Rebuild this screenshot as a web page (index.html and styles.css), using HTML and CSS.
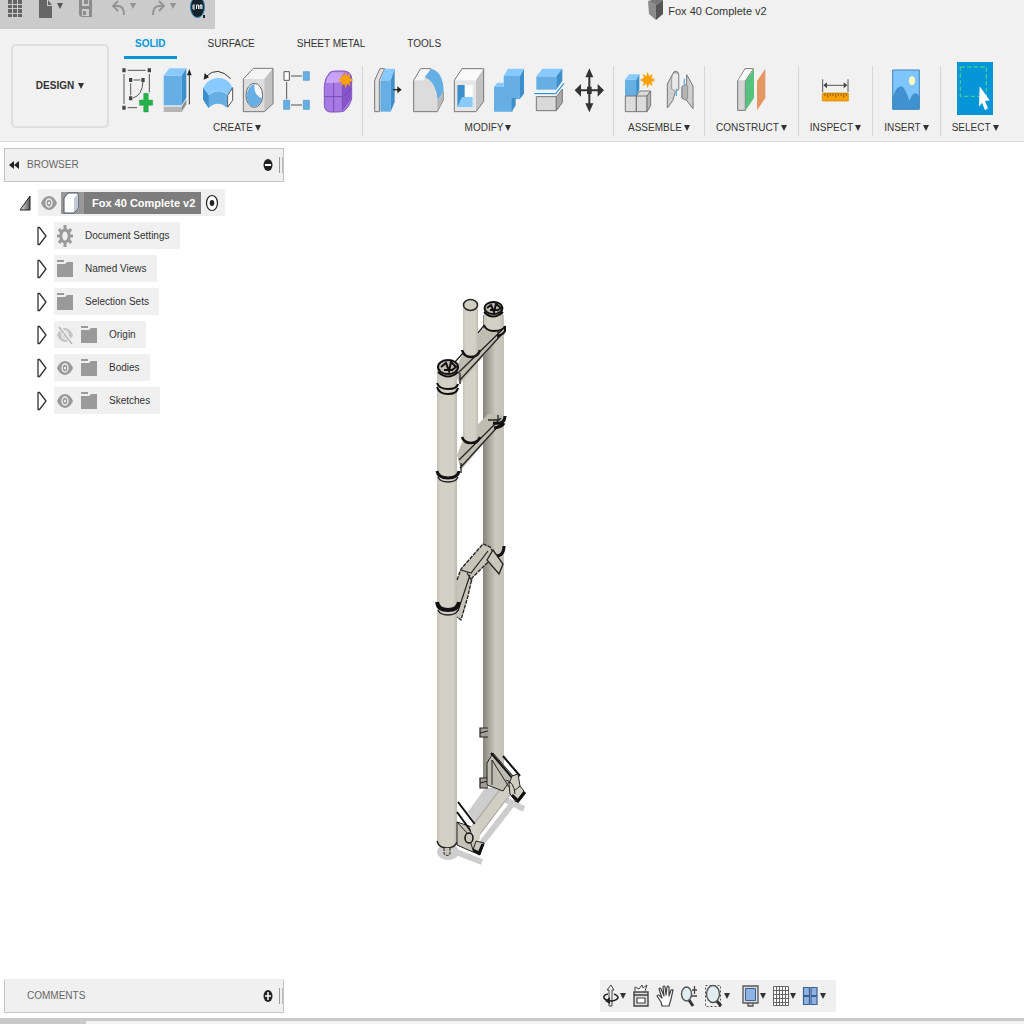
FILE: index.html
```html
<!DOCTYPE html>
<html lang="en">
<head>
    <meta charset="UTF-8">
    <meta name="viewport" content="width=device-width, initial-scale=1.0">
    <title>Fox 40 Complete v2</title>
    <link rel="stylesheet" href="styles.css">
</head>
<body>

<!-- Shared symbols -->
<svg class="symbols" aria-hidden="true">
    <symbol id="star" viewBox="-32 -34 64 68">
        <path fill="#f9a100" d="M0-33 6-15 19-25 15-9 31 0 15 9 19 25 6 15 0 33-6 15-19 25-15 9-31 0-15-9-19-25-6-15z"/>
    </symbol>
    <symbol id="folder" viewBox="0 0 16 18">
        <path fill="#9a9a9a" d="M0 0h7v2H0zM0 4h8l2-2h6v15H0z"/>
    </symbol>
    <symbol id="eye" viewBox="0 0 16 18">
        <path fill="#9a9a9a" d="M0 9Q3 2 8 2t8 7q-3 7-8 7T0 9z"/>
        <ellipse cx="8" cy="9" rx="3" ry="4" fill="#9a9a9a" stroke="#f0f0f0" stroke-width="1.3"/>
        <ellipse cx="8" cy="9" rx="1" ry="1.5" fill="#f0f0f0"/>
    </symbol>
    <symbol id="eye-off" viewBox="0 0 16 18">
        <path fill="#c4c4c4" d="M0 9Q3 2 8 2t8 7q-3 7-8 7T0 9z"/>
        <ellipse cx="8" cy="9" rx="3" ry="4" fill="#c4c4c4" stroke="#f0f0f0" stroke-width="1.3"/>
        <path stroke="#f0f0f0" stroke-width="4" d="M2 1 15 17"/>
        <path stroke="#b4b4b4" stroke-width="1.4" d="M2 1 15 18"/>
    </symbol>
    <symbol id="closed" viewBox="0 0 10 20">
        <path fill="#fff" stroke="#333" stroke-width="1.3" stroke-linejoin="round" d="M1 1.500h1.500L9 10 2.500 18.500H1z"/>
    </symbol>
</svg>

<header class="header">
    <div class="title-bar">
        <nav class="quick-bar" aria-label="Quick access">
            <div class="quick-group">
                <button aria-label="Data panel">
                    <svg width="16" height="20" viewBox="0 0 16 20"><path fill="#666" d="M1 0h4v4H1zM6 0h4v4H6zM11 0h4v4h-4zM1 5h4v3H1zM6 5h4v3H6zM11 5h4v3h-4zM1 9h4v4H1zM6 9h4v4H6zM11 9h4v4h-4zM1 14h4v3H1zM6 14h4v3H6zM11 14h4v3h-4z"/></svg>
                </button>
                <button aria-label="File">
                    <svg width="16" height="20" viewBox="0 0 16 20"><path fill="#666" d="M2 0h8v6h5v12H2zM11 0l4 5h-4z"/></svg>
                    <span class="caret dark"></span>
                </button>
                <button aria-label="Save">
                    <svg width="16" height="20" viewBox="0 0 16 20"><path fill="#8c8c8c" fill-rule="evenodd" d="M2 0h13v17H4l-2-2zM5 0v6h7V0zM5 9v7h7V9z"/><path fill="#8c8c8c" d="M7 0h4v4H7zM6 11h3v4H6z"/></svg>
                </button>
            </div>
            <div class="quick-group">
                <button aria-label="Undo">
                    <svg width="16" height="20" viewBox="0 0 16 20"><path fill="none" stroke="#929292" stroke-width="1.800" d="M8 1 3 6l5 5M3 6h5q6 0 6 9"/></svg>
                    <span class="caret"></span>
                </button>
                <button aria-label="Redo">
                    <svg width="16" height="20" viewBox="0 0 16 20"><path fill="none" stroke="#929292" stroke-width="1.800" d="M9 1l5 5-5 5M14 6H9q-6 0-6 9"/></svg>
                    <span class="caret"></span>
                </button>
                <button aria-label="Account">
                    <svg width="16" height="20" viewBox="0 0 16 20"><ellipse cx="7.500" cy="7" rx="7" ry="10.500" fill="#14232c" stroke="#2b89ad"/><path fill="none" stroke="#e8eff2" d="M5 5H3v4h2M3 7h2M6.500 9V5h2v4M10 9V5h2v4M11 5v4"/><path fill="#123" d="M13 15h2v3h-2z"/></svg>
                </button>
            </div>
        </nav>
        <h1 class="doc-title">
            <svg width="16" height="20" viewBox="0 0 16 20"><path fill="#8b8b8b" d="M0 1 8 5v15L1 14z"/><path fill="#555" d="M8 5l7-5v14l-7 6z"/><path fill="#777" d="M0 1 4 0h11L8 5z"/></svg>
            Fox 40 Complete v2
        </h1>
    </div>

    <div class="ribbon">
        <button class="btn-design">DESIGN <span class="caret black"></span></button>

        <div class="ribbon-main">
            <nav class="tabs">
                <a href="#" class="active">SOLID</a>
                <a href="#">SURFACE</a>
                <a href="#">SHEET METAL</a>
                <a href="#">TOOLS</a>
            </nav>

            <div class="groups">
                <section class="group">
                    <div class="tools">
                        <button aria-label="Create sketch"><svg viewBox="0 0 120 144">
                            <path fill="none" stroke="#555" stroke-width="3" d="M32 13h54M21 24v90M97 24v55M32 125h28M50 42h20M41 52v36M78 46q-2 42-30 50"/>
                            <path fill="#444" d="M16 7h10v12H16zM92 7h10v12H92zM16 119h10v12H16zM36 36h10v12H36zM73 36h10v12H73zM36 91h10v12H36z"/>
                            <path fill="#26b24b" stroke="#1b8f3a" d="M80 82h14v20h13v16H94v20H80v-20H67v-16h13z"/>
                        </svg></button>
                        <button aria-label="Extrude"><svg viewBox="0 0 120 144">
                            <path fill="#b5b5b5" d="M20 122h54v16H20z"/><path fill="#8e8e8e" d="M74 122l14-22v15l-14 23z"/>
                            <path fill="#66afe5" d="M20 29h54v89H20z"/><path fill="#88caff" d="M20 29 37 7h51L74 29z"/><path fill="#3d8fcb" d="M74 29 88 7v88l-14 23z"/>
                            <path stroke="#333" stroke-width="3" d="M97 20v95"/><path fill="#222" d="M97 9l7 19H90z"/>
                        </svg></button>
                        <button aria-label="Revolve"><svg viewBox="0 0 120 144">
                            <path fill="#88caff" d="M18 65Q34 36 64 36t43 29L92 88Q64 62 34 88z"/>
                            <path fill="#66afe5" d="M18 65l17 23q30-24 56 0v38q-28-26-57 0L18 100z"/>
                            <path fill="#3d8fcb" d="M18 65l17 23v38L18 100z"/>
                            <path fill="#fff" stroke="#555" stroke-width="3" d="M92 88l15-23v38l-15 20z"/>
                            <path fill="none" stroke="#333" stroke-width="3" d="M28 31q34-33 73 7"/><path fill="#222" d="M20 41l3-20 13 13z"/>
                        </svg></button>
                        <button aria-label="Hole"><svg viewBox="0 0 120 144">
                            <path fill="#dcdcdc" d="M19 39h63v98H19z"/><path fill="#f4f4f4" d="M19 39 49 7h59L82 39z"/><path fill="#c2c2c2" d="M82 39l26-32v106l-26 24z"/>
                            <path fill="none" stroke="#777" stroke-width="3" d="M19 39 49 7h59v106l-26 24H19z"/>
                            <ellipse cx="52" cy="88" rx="25" ry="36" fill="#f5f5f5" stroke="#666" stroke-width="3"/>
                            <path fill="#66afe5" d="M53 54q-5 34 22 43-5 23-23 25-20-2-23-30 2-32 24-38z"/>
                        </svg></button>
                        <button aria-label="Pattern"><svg viewBox="0 0 120 144">
                            <path stroke="#555" stroke-width="3" d="M42 30h33M29 48v52M42 117h33"/>
                            <path fill="#fff" stroke="#555" stroke-width="3" d="M21 17h16v26H21z"/>
                            <path fill="#66afe5" stroke="#4d93c6" stroke-width="2" d="M79 17h18v26H79zM20 103h18v27H20zM79 103h18v27H79z"/>
                        </svg></button>
                        <button aria-label="Create form"><svg viewBox="0 0 120 144">
                            <path fill="#a77ae3" stroke="#8357bf" stroke-width="3" d="M22 60q0-24 18-42 6-3 22-3h20q20 2 22 22v62q-6 22-22 36-8 3-24 3H40q-16 0-18-20z"/>
                            <path fill="#c9a3fb" d="M26 50q4-20 20-31h36q-10 10-12 30-22 4-44 1z"/>
                            <path fill="#8655cb" d="M78 52l24-28v74l-24 34z"/>
                            <path fill="none" stroke="#7143b0" stroke-width="2.500" d="M22 92h54l28-24M50 50v86M76 50v82"/>
                            <use href="#star" x="62" y="8" width="48" height="68"/>
                        </svg></button>
                    </div>
                    <button class="group-label">CREATE <span class="caret black"></span></button>
                </section>

                <section class="group">
                    <div class="tools">
                        <button aria-label="Press pull"><svg viewBox="0 0 120 144">
                            <path fill="#e2e2e2" stroke="#777" stroke-width="3" d="M34 137H20V43L36 8h14L34 43z"/>
                            <path fill="#66afe5" d="M37 43h31v94H37z"/><path fill="#88caff" d="M37 43 50 8h30L68 43z"/><path fill="#3d8fcb" d="M68 43 80 8v100l-12 29z"/>
                            <path stroke="#222" stroke-width="4" d="M75 71h18"/><path fill="#222" d="M88 61l13 10-13 11z"/>
                        </svg></button>
                        <button aria-label="Fillet"><svg viewBox="0 0 120 144">
                            <path fill="#dcdcdc" stroke="#777" stroke-width="3" d="M17 137V43L38 8h30l38 72v22l-18 35z"/>
                            <path fill="#f6f6f6" d="M19 43 39 10h28L50 35v8z"/>
                            <path fill="#b8b8b8" d="M88 105l18-26v22l-18 36z"/>
                            <path fill="#66afe5" d="M50 33 70 8q36 10 37 68L89 102Q84 48 50 33z"/>
                        </svg></button>
                        <button aria-label="Shell"><svg viewBox="0 0 120 144">
                            <path fill="#e6e6e6" d="M19 43h65v94H19z"/><path fill="#fafafa" d="M19 43 42 8h65L84 43z"/><path fill="#c2c2c2" d="M84 43l23-35v98l-23 31z"/>
                            <path fill="none" stroke="#777" stroke-width="3" d="M19 43 42 8h65v98l-23 31H19z"/>
                            <path fill="#fff" d="M28 57h46v66H28z"/><path fill="#3d8fcb" d="M28 57h22v36l-22 30z"/><path fill="#88caff" d="M28 123l14-30h32v30z"/>
                        </svg></button>
                        <button aria-label="Combine"><svg viewBox="0 0 120 144">
                            <path fill="#66afe5" d="M18 63h29V30h49v66H74v41H18z"/>
                            <path fill="#88caff" d="M18 63l10-13h19v13zM47 30 60 8h48L96 30z"/>
                            <path fill="#3d8fcb" d="M96 30l12-22v75L96 98H83v20l-12 19V96h25z"/>
                        </svg></button>
                        <button aria-label="Split body"><svg viewBox="0 0 120 144">
                            <path fill="#66afe5" d="M25 31h60v40H25z"/><path fill="#88caff" d="M25 31 43 8h60L85 31z"/><path fill="#3d8fcb" d="M85 31l18-23v36L85 71z"/>
                            <path fill="#d9d9d9" stroke="#777" stroke-width="3" d="M25 92h60v42H25z"/><path fill="#aaa" stroke="#777" stroke-width="3" d="M85 92l18-23v41l-18 24z"/>
                            <path fill="none" stroke="#fff" stroke-width="9" d="M19 83h64l25-31"/><path fill="none" stroke="#2f93d8" stroke-width="4" d="M19 83h64l25-31"/>
                        </svg></button>
                        <button aria-label="Move"><svg viewBox="0 0 120 144">
                            <path stroke="#333" stroke-width="6" d="M64 22v102M34 73h60"/>
                            <path fill="#333" d="M64 7l12 27H52zM64 139l12-27H52zM20 73l19-19v38zM108 73 89 54v38zM57 62h14v22H57z"/>
                        </svg></button>
                    </div>
                    <button class="group-label">MODIFY <span class="caret black"></span></button>
                </section>

                <section class="group">
                    <div class="tools">
                        <button aria-label="New component"><svg viewBox="0 0 120 144">
                            <path fill="#66afe5" d="M18 41h37v49H18z"/><path fill="#88caff" d="M18 41l12-16h34L52 41z"/><path fill="#3d8fcb" d="M52 41l9-14v44l-9 19z"/>
                            <path fill="#dcdcdc" stroke="#777" stroke-width="3" d="M19 90h33v47H19zM52 90l11-15h32L84 90v47H52zM52 90h32"/>
                            <path fill="#b5b5b5" stroke="#777" stroke-width="3" d="M84 90l11-15v44l-11 18z"/>
                            <use href="#star" x="62" y="8" width="48" height="68"/>
                        </svg></button>
                        <button aria-label="Joint"><svg viewBox="0 0 120 144">
                            <path fill="#cfcfcf" stroke="#777" stroke-width="3" d="M25 126V54l17-32q2-7 10-6 7 1 7 10v44l-10 8-8 26z"/>
                            <path fill="#e9e9e9" stroke="#777" stroke-width="2" d="M38 40q0-20 12-20t9 18v32l-10 6-11-8z"/>
                            <path fill="#cfcfcf" stroke="#777" stroke-width="3" d="M83 26l19 34v68l-20-26-13-6V62l14-6z"/>
                            <path fill="#b5b5b5" stroke="#777" stroke-width="2" d="M69 62l10-6 7 4v38l-7 4-10-6z"/>
                            <path stroke="#66afe5" stroke-width="4" d="M52 68v22M76 38v22"/>
                        </svg></button>
                    </div>
                    <button class="group-label">ASSEMBLE <span class="caret black"></span></button>
                </section>

                <section class="group wide">
                    <div class="tools">
                        <button aria-label="Offset plane"><svg viewBox="0 0 120 144">
                            <path fill="#d5d5d5" stroke="#777" stroke-width="3" d="M20 133V45L42 8h25L43 45v88z"/><path fill="#fafafa" d="M22 43 43 10h22L42 43z"/>
                            <path fill="#57c27e" d="M44 45 69 8v88l-25 37z"/><path fill="#e59763" d="M78 45l25-37v88l-25 37z"/>
                        </svg></button>
                    </div>
                    <button class="group-label">CONSTRUCT <span class="caret black"></span></button>
                </section>

                <section class="group wide">
                    <div class="tools">
                        <button aria-label="Measure"><svg viewBox="0 0 120 144">
                            <path stroke="#555" stroke-width="3" d="M23 40v38M99 40v38M28 58h66"/><path fill="#444" d="M25 58l11-9v18zM97 58l-11-9v18z"/>
                            <path fill="#f9a100" stroke="#c98200" stroke-width="2" d="M22 81h78v24H22z"/><path stroke="#5e4100" stroke-width="2" d="M30 82v8M38 82v13M46 82v8M54 82v8M62 82v13M70 82v8M78 82v8M86 82v13M94 82v8"/>
                        </svg></button>
                    </div>
                    <button class="group-label">INSPECT <span class="caret black"></span></button>
                </section>

                <section class="group wide">
                    <div class="tools">
                        <button aria-label="Insert image"><svg viewBox="0 0 120 144">
                            <path fill="#7ec5fb" d="M20 12h80v118H20z"/><path fill="#3f92cf" d="M20 92q15-38 30-30 10 10 20 42 14-36 30-14v40H20z"/>
                            <ellipse cx="78" cy="44" rx="9" ry="13" fill="#fffcc0"/><path fill="none" stroke="#3f86c0" stroke-width="3" d="M20 12h80v118H20z"/>
                        </svg></button>
                    </div>
                    <button class="group-label">INSERT <span class="caret black"></span></button>
                </section>

                <section class="group wide">
                    <div class="tools">
                        <button class="selected" aria-label="Select"><svg viewBox="0 0 108 159">
                            <path fill="none" stroke="#3ecb9c" stroke-width="4" stroke-dasharray="13 7" d="M10 15h78v88H10z"/>
                            <path fill="#fff" d="M68 73l30 42-14 2 9 22-9 6-9-23-9 12z"/>
                        </svg></button>
                    </div>
                    <button class="group-label">SELECT <span class="caret black"></span></button>
                </section>
            </div>
        </div>
    </div>
</header>

<main class="workspace">
    <div class="workspace-top">
        <aside class="browser">
            <div class="panel-bar">
                <button class="collapse" aria-label="Collapse browser"><svg width="10" height="10" viewBox="0 0 10 10"><path fill="#222" d="M5 1v8L0 5zM10 1v8L5 5z"/></svg></button>
                <span class="panel-name">BROWSER</span>
                <button aria-label="Hide browser"><svg width="10" height="14" viewBox="0 0 10 14"><ellipse cx="5" cy="7" rx="4.500" ry="6" fill="#222"/><path stroke="#fff" stroke-width="2" d="M2 7h6"/></svg></button>
                <span class="grip"></span>
            </div>

            <ul class="tree">
                <li class="root">
                    <svg width="12" height="18" viewBox="0 0 12 18"><defs><linearGradient id="open"><stop offset="0" stop-color="#eee"/><stop offset="1" stop-color="#555"/></linearGradient></defs><path fill="url(#open)" stroke="#222" d="M1 16 11 2v14z"/></svg>
                    <div class="chip">
                        <svg width="16" height="18"><use href="#eye"/></svg>
                        <div class="component">
                            <svg width="23" height="22" viewBox="0 0 23 22"><path fill="#999" d="M0 0h23v22H0z"/><path fill="#fff" stroke="#4d5566" d="M3 6 7 1h10v15l-4 5H3z"/><path fill="#c3c9d6" d="M13 6l4-4v14l-4 4z"/></svg>
                            <span>Fox 40 Complete v2</span>
                        </div>
                        <svg width="14" height="18" viewBox="0 0 14 18"><ellipse cx="7" cy="9" rx="5.500" ry="7.500" fill="#fff" stroke="#222" stroke-width="1.200"/><ellipse cx="7" cy="9" rx="2.300" ry="3" fill="#222"/></svg>
                    </div>
                </li>
                <li>
                    <svg width="10" height="20"><use href="#closed"/></svg>
                    <div class="chip">
                        <svg width="16" height="22" viewBox="0 0 16 22"><path stroke="#9a9a9a" stroke-width="3" d="M8 0v6M8 16v6M0 11h4M12 11h4M2 4l3 4M14 4l-3 4M2 18l3-4M14 18l-3-4"/><ellipse cx="8" cy="11" rx="4.200" ry="6" fill="none" stroke="#9a9a9a" stroke-width="3"/></svg>
                        <span>Document Settings</span>
                    </div>
                </li>
                <li>
                    <svg width="10" height="20"><use href="#closed"/></svg>
                    <div class="chip"><svg width="16" height="18"><use href="#folder"/></svg><span>Named Views</span></div>
                </li>
                <li>
                    <svg width="10" height="20"><use href="#closed"/></svg>
                    <div class="chip"><svg width="16" height="18"><use href="#folder"/></svg><span>Selection Sets</span></div>
                </li>
                <li>
                    <svg width="10" height="20"><use href="#closed"/></svg>
                    <div class="chip"><svg width="16" height="18"><use href="#eye-off"/></svg><svg width="16" height="18"><use href="#folder"/></svg><span>Origin</span></div>
                </li>
                <li>
                    <svg width="10" height="20"><use href="#closed"/></svg>
                    <div class="chip"><svg width="16" height="18"><use href="#eye"/></svg><svg width="16" height="18"><use href="#folder"/></svg><span>Bodies</span></div>
                </li>
                <li>
                    <svg width="10" height="20"><use href="#closed"/></svg>
                    <div class="chip"><svg width="16" height="18"><use href="#eye"/></svg><svg width="16" height="18"><use href="#folder"/></svg><span>Sketches</span></div>
                </li>
            </ul>
        </aside>

        <!-- Fork model -->
        <div class="canvas">
            <svg width="110" height="580" viewBox="0 0 110 580" role="img" aria-label="Fork model">
                <defs>
                    <linearGradient id="tube"><stop offset="0" stop-color="#c5c3b7"/><stop offset=".2" stop-color="#d3d1c6"/><stop offset=".8" stop-color="#d3d1c6"/><stop offset="1" stop-color="#bdbbae"/></linearGradient>
                    <linearGradient id="rear"><stop offset="0" stop-color="#85847b"/><stop offset=".3" stop-color="#aaa89e"/><stop offset=".6" stop-color="#cbc9bd"/><stop offset="1" stop-color="#c4c2b6"/></linearGradient>
                </defs>
                <!-- ground shadow -->
                <ellipse cx="18" cy="562" rx="11" ry="8" fill="#cdcdcd"/>
                <path fill="#cdcdcd" d="M38 522 55 498h18L47 536z"/>
                <path fill="none" stroke="#cdcdcd" stroke-width="6" d="M51 554 83 513M76 510l18 9M26 562l26 10"/>
                <!-- rear leg -->
                <path fill="url(#rear)" d="M53 25h21v475l-11-4H53z"/>
                <path fill="#a3a197" stroke="#222" stroke-width="1.200" d="M58 438h-8v9h8M50 443l8-2M58 488h-8v10h8M50 493l8-2"/>
                <!-- axle -->
                <path stroke="#a9a79c" stroke-width="12" d="M43 544 79 497"/>
                <path stroke="#d0cec2" stroke-width="10" d="M43 544 79 497"/>
                <!-- rear dropout -->
                <path fill="#bfbdb1" stroke="#222" d="M57 473l6-10 20 23 4 12-8-6-6 9-16-6zM62 495v-25l17 27"/>
                <path stroke="#111" stroke-width="2" d="M61 463l23 27M73 466l17 20"/>
                <path fill="#d0cec2" stroke="#222" d="M82 486l6-2 2 12 4 5-8 11-6-8-1-10z"/>
                <path fill="none" stroke="#111" stroke-width="3" d="M95 502l-7 9-6-6"/>
                <path fill="none" stroke="#222" d="M76 490q8 2 9 14M90 496l-6 5"/>
                <!-- lower crown -->
                <path fill="#bfbdb1" d="M27 165 33 150 58 124h14v8L31 180z"/>
                <path fill="none" stroke="#222" stroke-width="1.300" d="M29 170 71 128M30 178 72 132M31 183v-10M58 130h10v-5"/>
                <path fill="none" stroke="#111" stroke-width="3" d="M63 133q12 2 12-7M64 138q8-1 10-5"/>
                <!-- steerer -->
                <path fill="url(#tube)" d="M33 16h15v136q-8 5-15 0z"/>
                <path fill="none" stroke="#111" stroke-width="2.500" d="M32 147q2 6 9 6t9-6"/>
                <!-- upper crown -->
                <path fill="#bfbdb1" d="M24 82 34 61 56 35h16v9L30 94z"/>
                <path fill="url(#tube)" d="M33 16h15v47q-8 5-15 0z"/>
                <ellipse cx="40.500" cy="15" rx="7" ry="5.500" fill="#d0cec2" stroke="#222" stroke-width="1.500"/>
                <path fill="none" stroke="#111" stroke-width="2.500" d="M32 60q2 7 9 7t9-7"/>
                <path fill="none" stroke="#222" stroke-width="1.300" d="M28 83 72 40M30 90 72 44M25 72l8-9M48 43l8-10M30 94v-11M58 40h10v8"/>
                <!-- rear cap -->
                <path fill="url(#tube)" d="M54 20h19v19q-10 6-19 0z"/>
                <path fill="none" stroke="#111" stroke-width="2" d="M54 35q2 6 10 6 9 0 11-5v5q-2 4-8 5"/>
                <ellipse cx="63.500" cy="18" rx="9" ry="6" fill="#bfbdb1" stroke="#111" stroke-width="2"/>
                <path fill="none" stroke="#111" stroke-width="2" d="M57 18l4-3 3 7 2-8 5 4-4 3M54 22q9 9 19 0M60 20h8"/>
                <!-- front leg -->
                <path fill="url(#tube)" d="M7 80h20v473q-4 6-10 6-8-1-10-6z"/>
                <path fill="none" stroke="#222" stroke-width="1.500" d="M7 551q2 7 10 7t10-6"/>
                <path fill="#c4c2b6" stroke="#222" stroke-dasharray="3 1" d="M14 558v6q4 3 6 0v-6"/>
                <ellipse cx="18" cy="77" rx="10" ry="7" fill="#bfbdb1" stroke="#111" stroke-width="2"/>
                <path fill="none" stroke="#111" stroke-width="2" d="M11 77l5-4 3 8 2-9 5 5-4 3M8 82q10 9 20 0M14 80h9"/>
                <path fill="none" stroke="#111" stroke-width="2" d="M7 93q2 6 11 6t10-5M7 97q2 7 11 7t10-6"/>
                <path fill="none" stroke="#111" stroke-width="3" d="M7 181q1 7 11 7t11-7"/>
                <path fill="none" stroke="#222" stroke-width="1.300" d="M8 187q2 5 10 5t10-5"/>
                <!-- arch -->
                <path fill="none" stroke="#111" stroke-width="3" d="M62 266q12 2 12-10"/>
                <path fill="#c7c5b9" d="M27 290 31 279l22-25 7 3 3 5-3 8-18 18-4 18-7 24-4-3z"/>
                <path fill="none" stroke="#222" stroke-width="1.300" stroke-dasharray="4 1" d="M27 290l4-11 22-25 7 3 3 5-3 8-18 18-4 18-7 24-4-3"/>
                <path fill="none" stroke="#222" stroke-width="1.200" d="M31 280l10 3 17-22M40 285l-12 36M42 291l-5-8"/>
                <path fill="#c9c7bb" stroke="#222" stroke-width="1.300" d="M57 270l6-10 10 14-4 10z"/>
                <path fill="none" stroke="#111" stroke-width="4" d="M7 312q1 8 11 8t11-8"/>
                <path fill="none" stroke="#222" stroke-width="1.300" d="M8 320q2 5 10 5t10-5"/>
                <!-- front dropout -->
                <path fill="#c4c2b6" stroke="#222" d="M27 532l18 6 3 16 6-1-4 12-14-6-9-4zM27 532l11 12 5 16"/>
                <path stroke="#111" stroke-width="2" d="M28 512l19 25M27 522l16 22"/>
                <path fill="#d3d1c6" d="M40 537l6-4q5 2 4 16l-6 5z"/>
                <ellipse cx="39" cy="548" rx="4" ry="5" fill="#cbc9bc" stroke="#111" stroke-width="1.500"/>
                <path fill="#c9c7bb" stroke="#222" d="M46 551l8 2-5 12-6-5z"/>
                <path fill="none" stroke="#111" stroke-width="3" d="M53 554l-4 9-6-3"/>
            </svg>
        </div>
    </div>

    <div class="workspace-bottom">
        <div class="panel-bar comments">
            <span class="panel-name">COMMENTS</span>
            <button aria-label="Show comments"><svg width="10" height="14" viewBox="0 0 10 14"><ellipse cx="5" cy="7" rx="4.500" ry="6" fill="#222"/><path stroke="#fff" stroke-width="1.500" d="M2 7h6M5 3v8"/></svg></button>
            <span class="grip"></span>
        </div>

        <nav class="view-bar" aria-label="View">
            <button aria-label="Orbit"><svg width="18" height="24" viewBox="0 0 18 24"><path fill="#eee" stroke="#444" d="M7 22V6H5l4-5 3 5h-2v16z"/><path fill="none" stroke="#222" stroke-width="1.600" d="M6 10q-5 1-4 4 2 3 8 3 6-1 6-4-1-2-4-3"/><path fill="#222" d="M8 13v7l-5-3z"/></svg><span class="caret black"></span></button>
            <button aria-label="Look at"><svg width="18" height="24" viewBox="0 0 18 24"><path fill="#fff" stroke="#444" d="M3 7V3l4 2 3-4 1 3 4-3-2 6"/><path fill="#ddd" stroke="#444" stroke-width="1.400" d="M2 8h14v14H2zM2 11h14"/><path fill="#fff" stroke="#444" stroke-width="1.200" d="M5 14h8v5H5z"/></svg></button>
            <button aria-label="Pan"><svg width="18" height="24" viewBox="0 0 18 24"><path fill="#fff" stroke="#444" stroke-width="1.200" stroke-linejoin="round" d="M6 22 5 18 1 12q1-2 3 0l2 2L3 5q1-2 2 0l3 7L7 3q1-2 2 0l1 8 1-8q1-2 2 0v9l2-6q2-1 2 0l-2 9-2 7z"/></svg></button>
            <button aria-label="Zoom"><svg width="18" height="24" viewBox="0 0 18 24"><path stroke="#333" stroke-width="3" d="M9 16l4 6"/><ellipse cx="6.500" cy="10" rx="5" ry="7" fill="#e0eef0" stroke="#555" stroke-width="1.400"/><path stroke="#444" stroke-width="1.300" d="M12 6h5M14.500 2v8M12 12h5"/></svg></button>
            <button aria-label="Fit"><svg width="20" height="24" viewBox="0 0 20 24"><path fill="none" stroke="#555" stroke-dasharray="2 2" d="M1.500 1.500h15v21h-15z"/><path stroke="#333" stroke-width="3" d="M12 16l5 6"/><ellipse cx="9" cy="10" rx="6.500" ry="8.500" fill="#e0eef0" stroke="#555" stroke-width="1.400"/></svg><span class="caret black"></span></button>
            <button class="spaced" aria-label="Display settings"><svg width="18" height="24" viewBox="0 0 18 24"><path fill="#ddd" stroke="#555" stroke-width="1.300" d="M1 2h15v17H1zM6 19h5v3H6z"/><path fill="#8db3e2" stroke="#3b5f92" d="M3.500 4.500h10v12h-10z"/></svg><span class="caret black"></span></button>
            <button aria-label="Grid"><svg width="18" height="24" viewBox="0 0 18 24"><path fill="#fff" stroke="#666" d="M1.500 2.500h15v19h-15zM4.500 2v20M7.500 2v20M10.500 2v20M13.500 2v20M1 6.500h15M1 10.500h15M1 14.500h15M1 18.500h15"/></svg><span class="caret black"></span></button>
            <button aria-label="Viewports"><svg width="18" height="24" viewBox="0 0 18 24"><path fill="#8db3e2" stroke="#3b5f92" stroke-width="1.200" d="M1.500 3.500h6v8h-6zM9 3.500h6v8H9zM1.500 12.500h6v8h-6zM9 12.500h6v8H9z"/></svg><span class="caret black"></span></button>
        </nav>
    </div>
</main>

<footer class="timeline"><span></span></footer>

</body>
</html>
```
FILE: styles.css
```css
/* Global Styles */
* {
    box-sizing: border-box;
}

body {
    margin: 0;
    min-height: 100vh;
    display: flex;
    flex-direction: column;
    background: #fff;
    color: #333;
    font-family: "Liberation Sans", Arial, sans-serif;
    font-size: 10px;
    line-height: 16px;
}

button {
    display: flex;
    align-items: center;
    padding: 0;
    border: 0;
    background: none;
    color: inherit;
    font: inherit;
    cursor: pointer;
}

svg {
    display: block;
    flex: none;
}

.symbols {
    position: absolute;
    width: 0;
    height: 0;
}

.caret {
    border: 3px solid transparent;
    border-top: 6px solid #929292;
    border-bottom: 0;
}

.caret.dark {
    border-top-color: #555;
}

.caret.black {
    border-top-color: #333;
}

/* Header */
.header {
    background: #f1f1f1;
    border-bottom: 1px solid #dcdcdc;
}

.title-bar {
    display: flex;
    height: 29px;
}

.quick-bar {
    display: flex;
    gap: 17px;
    width: 215px;
    padding-left: 7px;
    background: #cbcbcb;
}

.quick-group {
    display: flex;
    align-items: flex-start;
    gap: 14px;
}

.quick-group button {
    gap: 4px;
}

.quick-group .caret {
    margin-bottom: 8px;
}

.doc-title {
    flex: 1;
    display: flex;
    justify-content: center;
    gap: 4px;
    margin: 0;
    padding-left: 176px;
    font-size: 11px;
    font-weight: normal;
    line-height: 22px;
}

.ribbon {
    display: flex;
    padding: 7px 0 5px 11px;
}

.btn-design {
    flex: none;
    justify-content: center;
    gap: 4px;
    width: 98px;
    height: 84px;
    margin-top: 8px;
    border: 2px solid #dedede;
    border-radius: 5px;
    font-weight: bold;
}

.ribbon-main {
    flex: 1;
    padding-left: 3px;
}

.tabs {
    display: flex;
    gap: 20px;
    padding-left: 12px;
}

.tabs a {
    padding: 0 11px 4px;
    border-bottom: 3px solid transparent;
    color: #333;
    text-decoration: none;
}

.tabs a.active {
    border-bottom-color: #0696d7;
    color: #0696d7;
    font-weight: bold;
}

.groups {
    display: flex;
    margin-top: 7px;
}

.group {
    display: flex;
    flex-direction: column;
    align-items: center;
    justify-content: space-between;
    height: 70px;
    padding: 0 5px;
    border-right: 1px solid #d6d6d6;
}

.group.wide {
    padding: 0 11px;
}

.group:last-child {
    border-right: 0;
}

.tools {
    display: flex;
    height: 48px;
}

.tools svg {
    width: 40px;
    height: 48px;
}

.tools .selected {
    height: 53px;
    margin-top: -4px;
    background: #0696d7;
}

.tools .selected svg {
    width: 36px;
    height: 53px;
}

.group-label {
    gap: 2px;
}

/* Workspace */
.workspace {
    flex: 1;
    display: flex;
    flex-direction: column;
    justify-content: space-between;
    padding: 6px 4px 5px;
}

.workspace-top,
.workspace-bottom {
    display: flex;
}

.browser,
.comments {
    width: 280px;
}

.panel-bar {
    display: flex;
    align-items: center;
    height: 34px;
    padding-left: 4px;
    border: 1px solid #c4c4c4;
    background: #f0f0f0;
    color: #666;
}

.panel-name {
    flex: 1;
    padding-left: 8px;
}

.comments {
    padding-left: 14px;
    border-top-color: #f0f0f0;
}

.grip {
    width: 4px;
    height: 16px;
    margin-left: 6px;
    border-left: 1px solid #999;
    border-right: 1px solid #bbb;
}

.tree {
    display: flex;
    flex-direction: column;
    gap: 6px;
    margin: 0;
    padding: 7px 0 0 33px;
    list-style: none;
}

.tree li {
    display: flex;
    align-items: center;
    gap: 7px;
}

.tree .root {
    margin-left: -18px;
}

.chip {
    display: flex;
    align-items: center;
    gap: 8px;
    height: 27px;
    padding: 0 10px 0 3px;
    background: #f0f0f0;
}

.chip > span {
    padding-left: 4px;
}

.root .chip {
    gap: 4px;
    padding-right: 6px;
}

.component {
    display: flex;
    align-items: center;
    background: #7d7d7d;
    color: #fff;
    font-size: 11px;
    font-weight: bold;
}

.component span {
    padding: 0 6px 0 8px;
}

.canvas {
    flex: 1;
    padding: 142px 0 0 146px;
}

.workspace-bottom {
    align-items: center;
    gap: 316px;
}

.view-bar {
    display: flex;
    gap: 6px;
    height: 32px;
    padding: 0 10px 0 2px;
    background: #f0f0f0;
}

.view-bar .spaced {
    margin-left: 6px;
}

/* Timeline */
.timeline {
    height: 6px;
    border-top: 3px solid #c9c9c9;
    background: #f3f3f3;
}

.timeline span {
    display: block;
    width: 86px;
    height: 3px;
    background: #c9c9c9;
}
```
